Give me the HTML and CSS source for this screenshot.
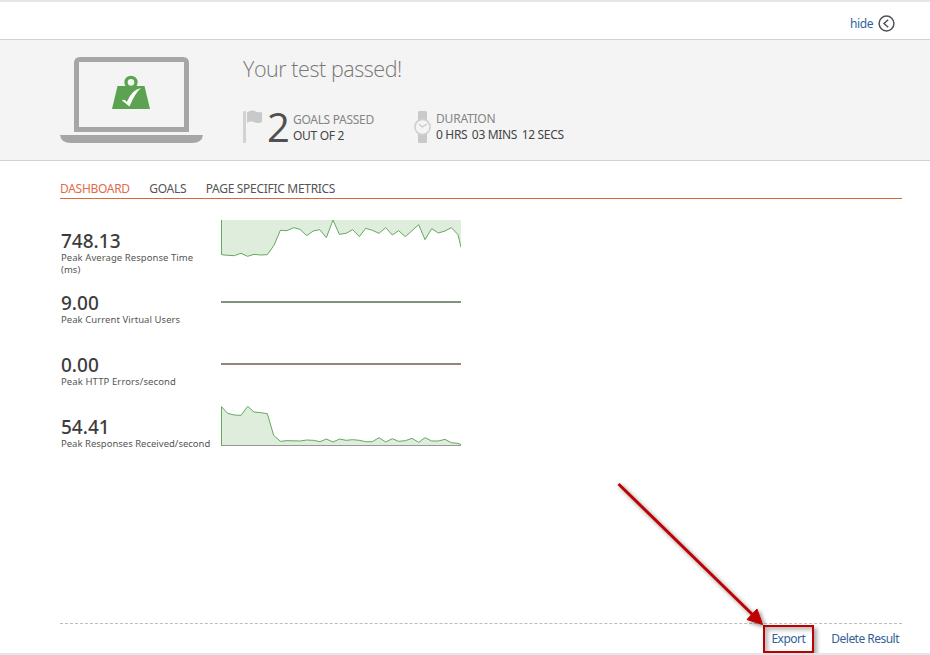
FILE: index.html
```html
<!DOCTYPE html>
<html lang="en">
<head>
<meta charset="utf-8">
<title>Test result</title>
<link rel="stylesheet" href="styles.css">
</head>
<body>
<div class="page">
  <header class="topbar">
    <a class="hide-link">hide</a>
    <svg class="back" viewBox="0 0 17 17"><circle cx="8.5" cy="8.5" r="7.4"/><path d="M10.2 4.7 6 8.5l4.2 3.8"/></svg>
  </header>
  <section class="hero">
    <svg class="laptop" viewBox="0 0 143 86">
      <path fill="#a6a6a6" fill-rule="evenodd" d="M20 0h103q6 0 6 6v69H14V6q0-6 6-6zM19 5v65h105V5z"/>
      <path fill="#a6a6a6" d="M0 78h143q-1 8-11 8H11Q1 86 0 78z"/>
      <circle cx="71" cy="25.300" r="5" fill="none" stroke="#5ba350" stroke-width="3.300"/>
      <path fill="#5ba350" d="M57.500 29h27l5.500 23H52z"/>
      <path fill="#fff" d="M62 43.500q2.500-2 4.800 1.500Q72 32.500 81 31q-6 5-11.500 18.500Q65 46 62 43.500z"/>
    </svg>
    <div class="summary">
      <h1>Your test passed!</h1>
      <div class="facts">
        <svg class="flag" viewBox="0 0 20 33"><rect x="0" y="1" width="3" height="32" rx="1" fill="#d2d2d2"/><path fill="#c9c9c9" d="M4 2.500Q9-1 13.500 1.800 16 2.800 19 2v10q-4 2-7.500.2Q8 10.500 4 12.500z"/></svg>
        <span class="count">2</span>
        <div class="fact goals"><div class="muted">GOALS PASSED</div><div class="outof">OUT OF 2</div></div>
        <svg class="watch" viewBox="0 0 17 32"><rect x="4" width="9" height="32" rx="1.500" fill="#c9c9c9"/><circle cx="8.500" cy="16" r="7.600" fill="#f4f4f4" stroke="#d0d0d0" stroke-width="1.600"/><path d="m5 13.200 3.400 2.800 4.600-3" fill="none" stroke="#c9c9c9" stroke-width="1.200"/></svg>
        <div class="fact duration"><div class="muted dur">DURATION</div><div class="time"><span>0 HRS</span><span>03 MINS</span><span>12 SECS</span></div></div>
      </div>
    </div>
  </section>
  <main>
    <nav class="tabs"><a class="tab-dash">DASHBOARD</a><a class="tab-goals">GOALS</a><a class="tab-page">PAGE SPECIFIC METRICS</a></nav>
    <div class="metrics">
      <div class="metric">
        <div class="info"><div class="value">748.13</div><div class="label l1">Peak Average Response Time<br>(ms)</div></div>
        <svg class="chart" viewBox="18 15 720 120"><path class="area" d="M18 15V119L38 121 58 122 78 115 98 124 117 118 137 120 157 119 177 91 196 46 216 47 236 38 255 43 275 62 295 48 314 44 334 68 354 15 373 58 393 55 413 44 433 65 452 40 472 46 492 55 512 38 532 60 551 47 571 65 591 47 611 29 630 74 650 41 670 54 690 48 709 38 729 59 738 97V15z"/><path class="line" d="M19.500 15V119L38 121 58 122 78 115 98 124 117 118 137 120 157 119 177 91 196 46 216 47 236 38 255 43 275 62 295 48 314 44 334 68 354 15 373 58 393 55 413 44 433 65 452 40 472 46 492 55 512 38 532 60 551 47 571 65 591 47 611 29 630 74 650 41 670 54 690 48 709 38 729 59 738 97"/></svg>
      </div>
      <div class="metric">
        <div class="info"><div class="value">9.00</div><div class="label l2">Peak Current Virtual Users</div></div>
        <div class="flat users"></div>
      </div>
      <div class="metric">
        <div class="info"><div class="value">0.00</div><div class="label l3">Peak HTTP Errors/second</div></div>
        <div class="flat errors"></div>
      </div>
      <div class="metric">
        <div class="info"><div class="value">54.41</div><div class="label l4">Peak Responses Received/second</div></div>
        <svg class="chart" viewBox="18 153 720 120"><path class="area" d="M18 154 38 175 58 180 78 181 98 154 117 171 137 173 157 176 176 241 196 259 216 257 256 258 275 255 295 256 315 260 334 252 354 261 374 252 393 256 413 254 433 256 452 260 472 260 492 248 512 261 532 251 551 259 571 257 591 250 611 262 630 248 650 258 670 258 690 253 709 263 729 265 738 269V272H18z"/><path d="M18 271.500H738" stroke="#949994" stroke-width="3"/><path class="line" d="M19.500 272V155L38 175 58 180 78 181 98 154 117 171 137 173 157 176 176 241 196 259 216 257 256 258 275 255 295 256 315 260 334 252 354 261 374 252 393 256 413 254 433 256 452 260 472 260 492 248 512 261 532 251 551 259 571 257 591 250 611 262 630 248 650 258 670 258 690 253 709 263 729 265 738 269"/></svg>
      </div>
    </div>
  </main>
  <footer><a class="export">Export</a><a class="delete">Delete Result</a></footer>
  <div class="callout"></div>
  <svg class="arrow" viewBox="0 0 170 160"><path d="M8.500 14 144 146" stroke="#c00000" stroke-width="3"/><path fill="#c00000" d="M152.500 154.500 147 139 137 149.500z" stroke="#c00000"/></svg>
</div>
</body>
</html>
```

FILE: styles.css
```css
* { box-sizing: border-box; }
body { margin: 0; background: #fff; font-family: "Noto Sans", "Open Sans", sans-serif; font-size: 12px; color: #444; }
.page { position: relative; height: 655px; overflow: hidden; display: flex; flex-direction: column; border-top: 2px solid #e6e6e6; border-bottom: 2px solid #e6e6e6; white-space: nowrap; }
.page::before { content: ""; position: absolute; left: 0; top: -2px; width: 13px; height: 2px; background: #cdc6c3; }
.topbar { height: 37px; flex: none; display: flex; align-items: center; padding: 5px 35.500px 0 850px; justify-content: space-between; color: #2e63a0; letter-spacing: -0.4px; }
.back { width: 17px; height: 17px; fill: none; stroke: #4c5357; stroke-width: 1.500; }
.hero { height: 122px; flex: none; display: flex; background: #f4f4f4; border: solid #d2d2d2; border-width: 1px 0; padding: 17px 0 0 60px; }
.laptop { width: 143px; height: 86px; flex: none; }
.summary { margin-left: 40px; }
h1 { margin: -3px 0 0; font: 300 21.500px/30px "Open Sans", sans-serif; letter-spacing: -0.45px; color: #777; }
.facts { display: flex; margin-top: 26px; }
.flag { width: 20px; height: 33px; }
.count { width: 30px; padding-left: 4px; font: 40px/34px "Open Sans", sans-serif; color: #505050; }
.fact { line-height: 16px; padding-top: 1px; letter-spacing: -0.3px; }
.goals { width: 121px; }
.goals .muted { margin-top: 1px; }
.muted { color: #858585; }
.dur { letter-spacing: -0.2px; }
.time { display: flex; gap: 4.500px; letter-spacing: -0.32px; }
.watch { width: 17px; height: 32px; margin: 1px 5px 0 0; }
main { margin: 0 28px 0 60px; flex: 1; }
.tabs { height: 38px; padding-top: 19px; display: flex; gap: 19.500px; line-height: 18px; border-bottom: 1px solid #d9683f; color: #555; letter-spacing: -0.3px; }
.tab-dash { color: #de6c48; }
.metrics { padding: 21px 0 0 1px; }
.metric { height: 62px; display: flex; }
.info { width: 160px; padding-top: 11px; }
.value { font-size: 19px; line-height: 21px; font-weight: 500; color: #3c3c3c; }
.label { font-size: 9.500px; line-height: 12px; color: #555; }
.l1, .l2 { letter-spacing: 0.06px; }
.l3 { letter-spacing: 0.1px; }
.chart { width: 240px; height: 40px; }
.area { fill: #deeddc; }
.line { fill: none; stroke: #65a960; stroke-width: 3; }
.flat { width: 240px; height: 2px; margin-top: 19px; background: #82937f; }
.errors { border-bottom: 1px solid #a67b7b; background: #7d927d; }
footer { height: 30px; margin: 0 28px 0 60px; flex: none; display: flex; justify-content: flex-end; gap: 26px; padding: 6px 3px 0 0; border-top: 1px dashed #bdbdbd; line-height: 18px; color: #355f96; letter-spacing: -0.52px; }
.callout { position: absolute; left: 763px; top: 623px; width: 51px; height: 28px; border: 2px solid #c00000; box-shadow: 3px 3px 4px #0005, inset 3px 3px 4px #0004; }
.arrow { position: absolute; left: 610px; top: 468px; width: 170px; height: 160px; filter: drop-shadow(2px 2px 2px #0007); }
```
